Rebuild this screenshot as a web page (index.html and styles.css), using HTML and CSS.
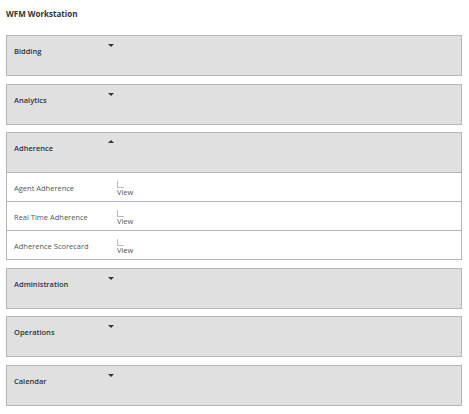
FILE: index.html
```html
<!DOCTYPE html>
<html lang="en">
<head>
    <meta charset="UTF-8">
    <meta name="viewport" content="width=device-width, initial-scale=1.0">
    <title>WFM Workstation</title>
    <link rel="stylesheet" href="styles.css">
</head>
<body>
    <h1 class="page-title">WFM Workstation</h1>

    <div class="panel">
        <div class="panel-head">
            <span class="panel-label">Bidding</span>
            <span class="caret caret-down"></span>
        </div>
    </div>

    <div class="panel">
        <div class="panel-head">
            <span class="panel-label">Analytics</span>
            <span class="caret caret-down"></span>
        </div>
    </div>

    <div class="panel">
        <div class="panel-head">
            <span class="panel-label">Adherence</span>
            <span class="caret caret-up"></span>
        </div>
        <div class="panel-row">
            <span class="row-label">Agent Adherence</span>
            <span class="view-link"><span class="broken-img"></span>View</span>
        </div>
        <div class="panel-row">
            <span class="row-label">Real Time Adherence</span>
            <span class="view-link"><span class="broken-img"></span>View</span>
        </div>
        <div class="panel-row">
            <span class="row-label">Adherence Scorecard</span>
            <span class="view-link"><span class="broken-img"></span>View</span>
        </div>
    </div>

    <div class="panel">
        <div class="panel-head">
            <span class="panel-label">Administration</span>
            <span class="caret caret-down"></span>
        </div>
    </div>

    <div class="panel">
        <div class="panel-head">
            <span class="panel-label">Operations</span>
            <span class="caret caret-down"></span>
        </div>
    </div>

    <div class="panel">
        <div class="panel-head">
            <span class="panel-label">Calendar</span>
            <span class="caret caret-down"></span>
        </div>
    </div>
</body>
</html>
```

FILE: styles.css
```css
body {
    font-family: "Open Sans", Arial, sans-serif;
    margin: 0;
    padding: 8px 8px 0 6px;
    background-color: #fff;
    color: #333;
    font-size: 7.5px;
}
.page-title {
    font-size: 8px;
    font-weight: bold;
    margin: 0 0 15px;
    line-height: 12px;
    color: #333;
}
.panel {
    border: 1px solid #b5b5b5;
    margin-bottom: 7.5px;
    width: 454px;
}
.panel-head {
    background-color: #e0e0e0;
    height: 39px;
    display: flex;
    align-items: flex-start;
    padding-left: 7px;
}
.panel-label {
    font-weight: 600;
    color: #2b3540;
    width: 94px;
    margin-top: 9px;
    line-height: 12px;
}
.caret {
    width: 0;
    height: 0;
    border-left: 3px solid transparent;
    border-right: 3px solid transparent;
    margin-top: 8px;
}
.caret-down {
    border-top: 3px solid #333;
}
.caret-up {
    border-bottom: 3px solid #333;
    margin-top: 7px;
}
.panel-row {
    border-top: 1px solid #b5b5b5;
    height: 28px;
    display: flex;
    align-items: flex-start;
    padding-left: 7px;
    color: #555;
}
.panel-row .row-label {
    width: 103px;
    margin-top: 9px;
    line-height: 12px;
}
.view-link {
    display: flex;
    flex-direction: column;
    margin-top: 8px;
    line-height: 9px;
    color: #555;
}
.broken-img {
    width: 6px;
    height: 6px;
    border-left: 1px solid #bbb;
    border-bottom: 1px solid #bbb;
}
```
